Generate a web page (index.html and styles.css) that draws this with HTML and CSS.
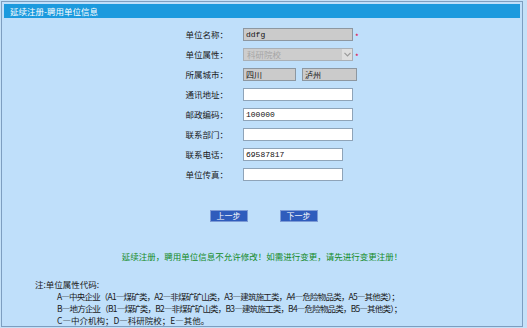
FILE: index.html
```html
<!DOCTYPE html>
<html lang="zh">
<head>
    <meta charset="UTF-8">
    <title>延续注册-聘用单位信息</title>
    <link rel="stylesheet" href="styles.css">
</head>
<body>
    <div class="panel">
        <div class="panel-title">延续注册-聘用单位信息</div>

        <div class="reg-form">
            <label>单位名称：</label>
            <div class="field">
                <input class="txt ro w110" value="ddfg" readonly><span class="req">*</span>
            </div>

            <label>单位属性：</label>
            <div class="field">
                <div class="select-box">
                    <span class="select-text">科研院校</span>
                    <span class="select-arrow">
                        <svg width="7" height="5" viewBox="0 0 7 5"><path d="M0.5 0.8 L3.5 3.8 L6.5 0.8" fill="none" stroke="#9a9a9a" stroke-width="1.2"/></svg>
                    </span>
                </div><span class="req">*</span>
            </div>

            <label>所属城市：</label>
            <div class="field">
                <input class="txt ro w53" value="四川" readonly>
                <input class="txt ro w55 gap" value="泸州" readonly>
            </div>

            <label>通讯地址：</label>
            <div class="field"><input class="txt w110" value=""></div>

            <label>邮政编码：</label>
            <div class="field"><input class="txt w110" value="100000"></div>

            <label>联系部门：</label>
            <div class="field"><input class="txt w110" value=""></div>

            <label>联系电话：</label>
            <div class="field"><input class="txt w100" value="69587817"></div>

            <label>单位传真：</label>
            <div class="field"><input class="txt w100" value=""></div>
        </div>

        <div class="buttons">
            <button class="btn">上一步</button>
            <button class="btn">下一步</button>
        </div>

        <p class="notice">延续注册，聘用单位信息不允许修改！如需进行变更，请先进行变更注册！</p>

        <div class="notes">
            <p>注:单位属性代码:</p>
            <p class="indent tight">A—中央企业（A1—煤矿类，A2—非煤矿矿山类，A3—建筑施工类，A4—危险物品类，A5—其他类）；</p>
            <p class="indent tight">B—地方企业（B1—煤矿类，B2—非煤矿矿山类，B3—建筑施工类，B4—危险物品类，B5—其他类）；</p>
            <p class="indent">C—中介机构；D—科研院校；E—其他。</p>
        </div>
    </div>
</body>
</html>
```

FILE: styles.css
```css
/* 页面整体 */
body {
    margin: 0;
    background: #c4e1f8;
    font-family: "Noto Sans CJK SC", "DejaVu Sans", sans-serif;
    font-size: 8.5px;
    color: #1a1a1a;
}

/* 外框 */
.panel {
    margin: 1px 0 0 1px;
    width: 522px;
    box-sizing: border-box;
    border: 1px solid #7d9ec0;
    padding: 2px 2px 0 2px;
    background: #bfdffa;
}

/* 标题栏 */
.panel-title {
    height: 14px;
    line-height: 14px;
    padding-left: 6px;
    background: #1c9ade;
    color: #ffffff;
}

/* 表单 */
.reg-form {
    margin-top: 6px;
    display: grid;
    grid-template-columns: 224px 1fr;
    grid-auto-rows: 20px;
    column-gap: 15px;
    align-items: center;
}

.reg-form label {
    text-align: right;
}

.field {
    display: flex;
    align-items: center;
}

.txt {
    box-sizing: border-box;
    height: 13px;
    margin: 0;
    padding: 0 2px;
    border: 1px solid #8fa4b8;
    background: #ffffff;
    font-family: "Liberation Mono", "Noto Sans CJK SC", monospace;
    font-size: 8px;
    color: #111;
    outline: none;
}

.txt.ro {
    background: #cbcbcb;
    border-color: #8d97a0;
}

.w110 { width: 110px; }
.w100 { width: 100px; }
.w53 { width: 53px; }
.w55 { width: 55px; }
.gap { margin-left: 6px; }

.req {
    color: #e0003c;
    font-size: 8px;
    margin: 5px 0 0 2px;
    line-height: 8px;
}

/* 下拉框（禁用） */
.select-box {
    box-sizing: border-box;
    width: 110px;
    height: 13px;
    display: flex;
    align-items: center;
    border: 1px solid #a9b0b6;
    background: #cdcdcd;
}

.select-text {
    flex: 1;
    padding-left: 3px;
    color: #a6a6a6;
    font-size: 8.5px;
}

.select-arrow {
    width: 10px;
    height: 11px;
    display: flex;
    align-items: center;
    justify-content: center;
    background: #dedede;
}

/* 按钮 */
.buttons {
    margin-top: 26px;
    display: flex;
    justify-content: center;
    gap: 32px;
    padding-left: 3px;
}

.btn {
    width: 38px;
    height: 12px;
    padding: 0;
    border: 1px solid #7d9bd6;
    background: #2f5cbc;
    color: #ffffff;
    font-family: "Noto Sans CJK SC", sans-serif;
    font-size: 8px;
    line-height: 10px;
}

/* 提示 */
.notice {
    margin: 28px 0 0 0;
    line-height: 12px;
    text-align: center;
    color: #128a1e;
}

/* 说明 */
.notes {
    margin-top: 16px;
    padding-left: 31px;
}

.notes p {
    margin: 0;
    line-height: 12px;
}

.notes .indent {
    padding-left: 22px;
}

.notes .tight {
    letter-spacing: -0.8px;
}
```
